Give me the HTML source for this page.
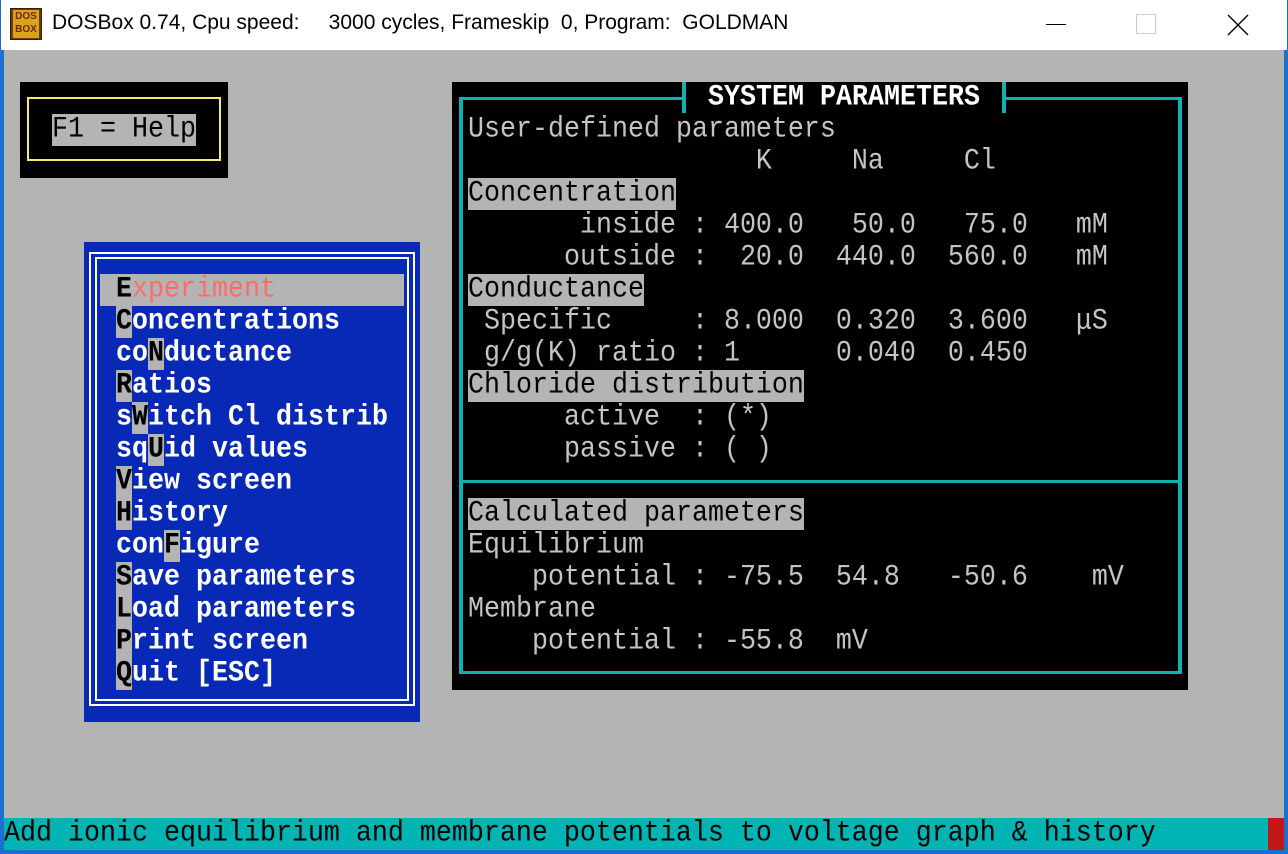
<!DOCTYPE html>
<html><head><meta charset="utf-8"><style>
*{margin:0;padding:0;box-sizing:border-box}
body{width:1288px;height:854px;overflow:hidden;background:#1a6fd0;position:relative}
.a{position:absolute}
.t{position:absolute;white-space:pre;font-family:"Liberation Mono",monospace;font-size:26.667px;line-height:32px;height:32px;transform:scaleY(1.12);transform-origin:50% 55%}
.g{color:#c4c4c4}.w{color:#fff;font-weight:bold}.k{color:#000}
.w .k{font-weight:bold}
</style></head><body>
<div class="a" style="left:1px;top:0;width:1286px;height:50px;background:#fff"></div>
<div class="a" style="left:10px;top:8px;width:32px;height:32px;background:#6b3a10;border:1px solid #3a1f06"></div>
<div class="a" style="left:13px;top:10px;width:26px;height:28px;background:#d9a21a;font:bold 10px/13px 'Liberation Sans',sans-serif;color:#6b2a00;text-align:center">DOS<br>BOX</div>
<div class="a" style="left:52px;top:9px;font:21px/28px 'Liberation Sans',sans-serif;color:#000;white-space:pre">DOSBox 0.74, Cpu speed:     3000 cycles, Frameskip  0, Program:  GOLDMAN</div>
<div class="a" style="left:1046px;top:24px;width:20px;height:1px;background:#000"></div>
<div class="a" style="left:1136px;top:14px;width:20px;height:20px;border:1px solid #ccc"></div>
<svg class="a" style="left:1226px;top:13px" width="24" height="24"><path d="M2 2L22 22M22 2L2 22" stroke="#000" stroke-width="1.4"/></svg>
<div class="a" style="left:4px;top:50px;width:1280px;height:800px;background:#b4b4b4"></div>
<div class="a" style="left:20px;top:82px;width:208px;height:96px;background:#000"></div>
<div class="a" style="left:27px;top:97px;width:194px;height:64px;border:2px solid #f4ec6a"></div>
<div class="a" style="left:52px;top:114px;width:144px;height:32px;background:#b4b4b4"></div>
<div class="t k" style="left:52px;top:114px">F1 = Help</div>
<div class="a" style="left:84px;top:242px;width:336px;height:480px;background:#0829b5"></div>
<div class="a" style="left:89px;top:252px;width:326px;height:454px;border:2px solid #fff"></div>
<div class="a" style="left:95px;top:257px;width:314px;height:444px;border:2px solid #fff"></div>
<div class="a" style="left:100px;top:274px;width:304px;height:32px;background:#b4b4b4"></div>
<div class="a" style="left:116px;top:306px;width:16px;height:32px;background:#b4b4b4"></div>
<div class="a" style="left:148px;top:338px;width:16px;height:32px;background:#b4b4b4"></div>
<div class="a" style="left:116px;top:370px;width:16px;height:32px;background:#b4b4b4"></div>
<div class="a" style="left:132px;top:402px;width:16px;height:32px;background:#b4b4b4"></div>
<div class="a" style="left:148px;top:434px;width:16px;height:32px;background:#b4b4b4"></div>
<div class="a" style="left:116px;top:466px;width:16px;height:32px;background:#b4b4b4"></div>
<div class="a" style="left:116px;top:498px;width:16px;height:32px;background:#b4b4b4"></div>
<div class="a" style="left:164px;top:530px;width:16px;height:32px;background:#b4b4b4"></div>
<div class="a" style="left:116px;top:562px;width:16px;height:32px;background:#b4b4b4"></div>
<div class="a" style="left:116px;top:594px;width:16px;height:32px;background:#b4b4b4"></div>
<div class="a" style="left:116px;top:626px;width:16px;height:32px;background:#b4b4b4"></div>
<div class="a" style="left:116px;top:658px;width:16px;height:32px;background:#b4b4b4"></div>
<div class="t" style="left:116px;top:274px"><span class="k" style="font-weight:bold">E</span><span style="color:#ff6b6b">xperiment</span></div>
<div class="t w" style="left:116px;top:306px"><span class="k">C</span>oncentrations</div>
<div class="t w" style="left:116px;top:338px">co<span class="k">N</span>ductance</div>
<div class="t w" style="left:116px;top:370px"><span class="k">R</span>atios</div>
<div class="t w" style="left:116px;top:402px">s<span class="k">W</span>itch Cl distrib</div>
<div class="t w" style="left:116px;top:434px">sq<span class="k">U</span>id values</div>
<div class="t w" style="left:116px;top:466px"><span class="k">V</span>iew screen</div>
<div class="t w" style="left:116px;top:498px"><span class="k">H</span>istory</div>
<div class="t w" style="left:116px;top:530px">con<span class="k">F</span>igure</div>
<div class="t w" style="left:116px;top:562px"><span class="k">S</span>ave parameters</div>
<div class="t w" style="left:116px;top:594px"><span class="k">L</span>oad parameters</div>
<div class="t w" style="left:116px;top:626px"><span class="k">P</span>rint screen</div>
<div class="t w" style="left:116px;top:658px"><span class="k">Q</span>uit [ESC]</div>
<div class="a" style="left:452px;top:82px;width:736px;height:608px;background:#000"></div>
<div class="a" style="left:459px;top:97px;width:4px;height:577px;background:#12b1b1"></div>
<div class="a" style="left:1178px;top:97px;width:4px;height:577px;background:#12b1b1"></div>
<div class="a" style="left:459px;top:97px;width:227px;height:3px;background:#12b1b1"></div>
<div class="a" style="left:1002px;top:97px;width:180px;height:3px;background:#12b1b1"></div>
<div class="a" style="left:682px;top:82px;width:4px;height:31px;background:#12b1b1"></div>
<div class="a" style="left:1002px;top:82px;width:4px;height:31px;background:#12b1b1"></div>
<div class="a" style="left:459px;top:480px;width:723px;height:3px;background:#12b1b1"></div>
<div class="a" style="left:459px;top:671px;width:723px;height:3px;background:#12b1b1"></div>
<div class="t w" style="left:708px;top:82px">SYSTEM PARAMETERS</div>
<div class="a" style="left:468px;top:178px;width:208px;height:32px;background:#b4b4b4"></div>
<div class="a" style="left:468px;top:274px;width:176px;height:32px;background:#b4b4b4"></div>
<div class="a" style="left:468px;top:370px;width:336px;height:32px;background:#b4b4b4"></div>
<div class="a" style="left:468px;top:498px;width:336px;height:32px;background:#b4b4b4"></div>
<div class="t g" style="left:468px;top:114px">User-defined parameters</div>
<div class="t g" style="left:468px;top:146px">                  K     Na     Cl</div>
<div class="t k" style="left:468px;top:178px">Concentration</div>
<div class="t g" style="left:468px;top:210px">       inside : 400.0   50.0   75.0   mM</div>
<div class="t g" style="left:468px;top:242px">      outside :  20.0  440.0  560.0   mM</div>
<div class="t k" style="left:468px;top:274px">Conductance</div>
<div class="t g" style="left:468px;top:306px"> Specific     : 8.000  0.320  3.600   μS</div>
<div class="t g" style="left:468px;top:338px"> g/g(K) ratio : 1      0.040  0.450</div>
<div class="t k" style="left:468px;top:370px">Chloride distribution</div>
<div class="t g" style="left:468px;top:402px">      active  : (*)</div>
<div class="t g" style="left:468px;top:434px">      passive : ( )</div>
<div class="t k" style="left:468px;top:498px">Calculated parameters</div>
<div class="t g" style="left:468px;top:530px">Equilibrium</div>
<div class="t g" style="left:468px;top:562px">    potential : -75.5  54.8   -50.6    mV</div>
<div class="t g" style="left:468px;top:594px">Membrane</div>
<div class="t g" style="left:468px;top:626px">    potential : -55.8  mV</div>
<div class="a" style="left:4px;top:818px;width:1280px;height:32px;background:#00b4b4"></div>
<div class="a" style="left:1268px;top:818px;width:16px;height:32px;background:#c3171b"></div>
<div class="t k" style="left:4px;top:818px">Add ionic equilibrium and membrane potentials to voltage graph &amp; history</div>
</body></html>
